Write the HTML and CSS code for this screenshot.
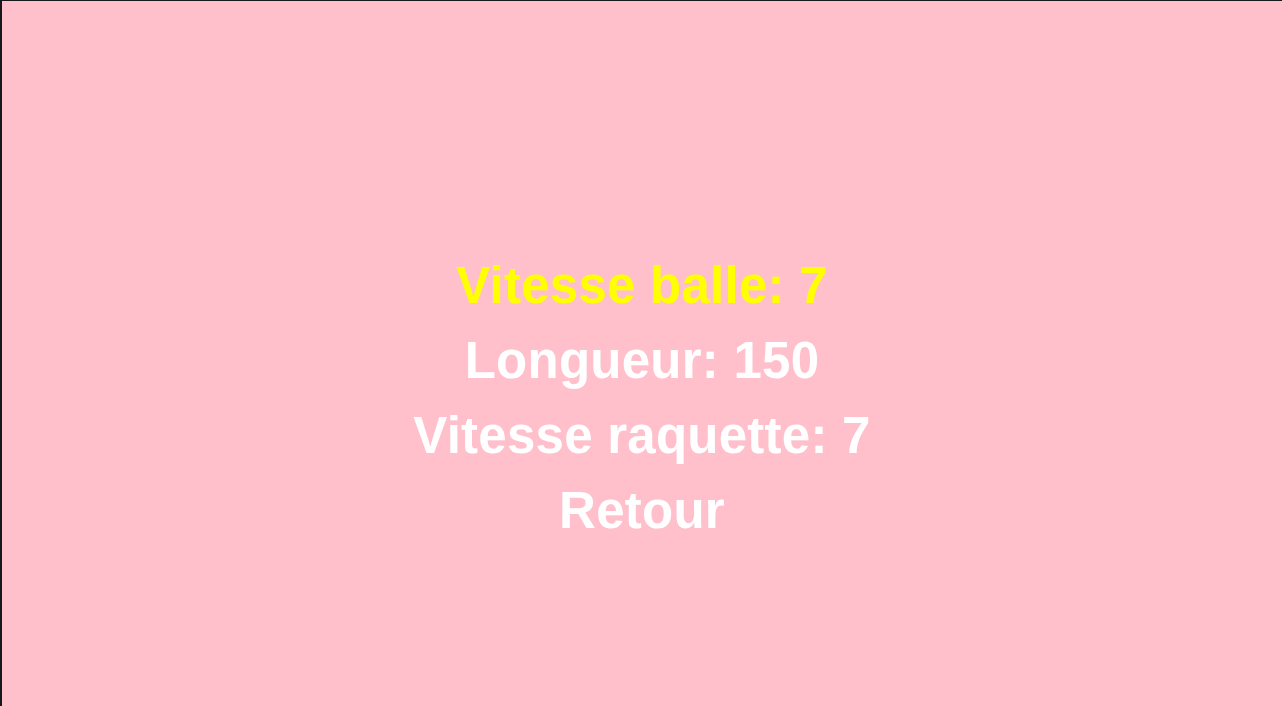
FILE: index.html
```html
<!DOCTYPE html>
<html lang="fr">
<head>
<meta charset="utf-8">
<title>Options</title>
<link rel="stylesheet" href="styles.css">
</head>
<body>
<main class="screen">
  <ul class="menu">
    <li class="item item-active">Vitesse balle: 7</li>
    <li class="item">Longueur: 150</li>
    <li class="item">Vitesse raquette: 7</li>
    <li class="item">Retour</li>
  </ul>
</main>
</body>
</html>
```
FILE: styles.css
```css
html, body {
  margin: 0;
  padding: 0;
  height: 100%;
  background: #ffc0cb;
}
.screen {
  box-sizing: border-box;
  height: 100vh;
  padding-top: 88px;
  border-top: 1px solid #16181b;
  border-left: 2px solid #16181b;
  background: #ffc0cb;
  display: flex;
  flex-direction: column;
  justify-content: center;
  align-items: center;
}
.menu {
  list-style: none;
  margin: 0;
  padding: 0;
  display: flex;
  flex-direction: column;
  align-items: center;
}
.item {
  font-family: "Liberation Sans", Arial, sans-serif;
  font-weight: bold;
  font-size: 51px;
  letter-spacing: 0.25px;
  line-height: 75px;
  color: #ffffff;
  white-space: nowrap;
}
.item-active {
  color: #ffff00;
}
```
